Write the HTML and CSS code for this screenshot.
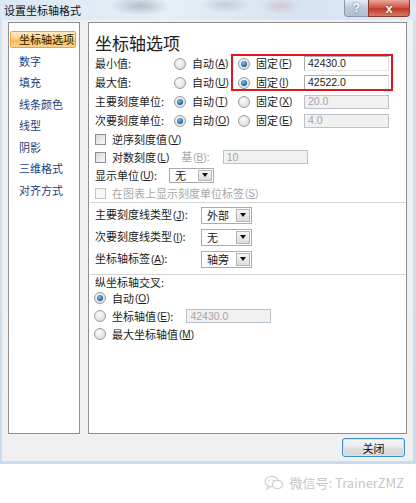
FILE: index.html
```html
<!DOCTYPE html>
<html lang="zh-CN">
<head>
    <meta charset="UTF-8">
    <meta name="viewport" content="width=device-width, initial-scale=1.0">
    <title>设置坐标轴格式</title>
    <link rel="stylesheet" href="styles.css">
</head>
<body>

<div class="window">
    <!-- Title bar -->
    <div class="titlebar">
        <span class="title">设置坐标轴格式</span>
        <div class="caption">
            <span class="cap-help">?</span>
            <span class="cap-close">x</span>
        </div>
    </div>

    <div class="frame">
        <div class="panes">
            <!-- Left navigation -->
            <ul class="nav">
                <li class="active">坐标轴选项</li>
                <li>数字</li>
                <li>填充</li>
                <li>线条颜色</li>
                <li>线型</li>
                <li>阴影</li>
                <li>三维格式</li>
                <li>对齐方式</li>
            </ul>

            <!-- Options -->
            <div class="content">
                <h2 class="section-title">坐标轴选项</h2>

                <div class="axis-rows">
                    <span>最小值:</span>
                    <label class="opt"><i class="radio"></i>自动<span class="key">(<u>A</u>)</span></label>
                    <label class="opt"><i class="radio on"></i>固定<span class="key">(<u>F</u>)</span></label>
                    <span class="field">42430.0</span>

                    <span>最大值:</span>
                    <label class="opt"><i class="radio"></i>自动<span class="key">(<u>U</u>)</span></label>
                    <label class="opt"><i class="radio on"></i>固定<span class="key">(<u>I</u>)</span></label>
                    <span class="field">42522.0</span>

                    <span>主要刻度单位:</span>
                    <label class="opt"><i class="radio on"></i>自动<span class="key">(<u>T</u>)</span></label>
                    <label class="opt"><i class="radio"></i>固定<span class="key">(<u>X</u>)</span></label>
                    <span class="field disabled">20.0</span>

                    <span>次要刻度单位:</span>
                    <label class="opt"><i class="radio on"></i>自动<span class="key">(<u>O</u>)</span></label>
                    <label class="opt"><i class="radio"></i>固定<span class="key">(<u>E</u>)</span></label>
                    <span class="field disabled">4.0</span>

                    <!-- red annotation box drawn over the fixed-value fields -->
                    <span class="highlight"></span>
                </div>

                <div class="check-row"><i class="check"></i>逆序刻度值<span class="key">(<u>V</u>)</span></div>
                <div class="check-row">
                    <i class="check"></i>对数刻度<span class="key">(<u>L</u>)</span>
                    <span class="muted base">基<span class="key">(<u>B</u>)</span>:</span>
                    <span class="field disabled">10</span>
                </div>
                <div class="check-row">
                    显示单位<span class="key">(<u>U</u>)</span>:
                    <span class="combo unit"><span class="combo-text">无</span><span class="combo-btn"></span></span>
                </div>
                <div class="check-row muted"><i class="check off"></i>在图表上显示刻度单位标签<span class="key">(<u>S</u>)</span></div>

                <div class="sep"></div>

                <div class="tick-rows">
                    <div class="tick-row">
                        <span class="tick-label">主要刻度线类型<span class="key">(<u>J</u>)</span>:</span>
                        <span class="combo"><span class="combo-text">外部</span><span class="combo-btn"></span></span>
                    </div>
                    <div class="tick-row">
                        <span class="tick-label">次要刻度线类型<span class="key">(<u>I</u>)</span>:</span>
                        <span class="combo"><span class="combo-text">无</span><span class="combo-btn"></span></span>
                    </div>
                    <div class="tick-row">
                        <span class="tick-label">坐标轴标签<span class="key">(<u>A</u>)</span>:</span>
                        <span class="combo"><span class="combo-text">轴旁</span><span class="combo-btn"></span></span>
                    </div>
                </div>

                <div class="sep sep-low"></div>

                <div class="cross-title">纵坐标轴交叉:</div>
                <div class="cross-row first"><i class="radio on"></i>自动<span class="key">(<u>O</u>)</span></div>
                <div class="cross-row">
                    <i class="radio"></i>坐标轴值<span class="key">(<u>E</u>)</span>:
                    <span class="field disabled cross-field">42430.0</span>
                </div>
                <div class="cross-row"><i class="radio"></i>最大坐标轴值<span class="key">(<u>M</u>)</span></div>
            </div>
        </div>

        <div class="footer">
            <button class="close-btn">关闭</button>
        </div>
    </div>
</div>

<!-- Watermark -->
<div class="watermark">
    <svg width="20" height="16" viewBox="0 0 20 16">
        <ellipse cx="7.5" cy="6.5" rx="6.5" ry="5.2" fill="none" stroke="#d2d2d2" stroke-width="1.2"/>
        <path d="M4 11 L3 14 L7 11.6" fill="none" stroke="#d2d2d2" stroke-width="1.1"/>
        <ellipse cx="13.5" cy="9.5" rx="5.2" ry="4.2" fill="#fff" stroke="#d2d2d2" stroke-width="1.2"/>
        <circle cx="5" cy="5.5" r="0.9" fill="#d2d2d2"/>
        <circle cx="9.5" cy="5.5" r="0.9" fill="#d2d2d2"/>
    </svg>
    <span>微信号: TrainerZMZ</span>
</div>

</body>
</html>
```

FILE: styles.css
```css
* {
    box-sizing: border-box;
    margin: 0;
    padding: 0;
}

body {
    font-family: "Noto Sans CJK SC", "Liberation Sans", sans-serif;
    font-size: 11px;
    line-height: 13px;
    color: #1b1b1b;
    background-color: #fff;
    width: 416px;
}

/* Window */
.window {
    background: linear-gradient(#d4e3f2, #c8dbef);
    padding: 0 3px 3px 2px;
}

.titlebar {
    height: 20px;
    display: flex;
    align-items: flex-start;
    justify-content: space-between;
    margin: 0 -3px 0 -2px;
    padding-left: 4px;
    background:
        radial-gradient(ellipse 30px 10px at 140px 6px, rgba(90, 100, 120, 0.35), transparent),
        radial-gradient(ellipse 25px 8px at 225px 5px, rgba(110, 120, 140, 0.25), transparent),
        radial-gradient(ellipse 20px 8px at 280px 6px, rgba(190, 120, 120, 0.25), transparent),
        linear-gradient(to right, #dbe7f3, #e7eff7 40%, #d6e3f1 70%, #dfe9f4);
}

.title {
    line-height: 20px;
    color: #111;
}

.caption {
    display: flex;
    margin-right: 6px;
}

.cap-help, .cap-close {
    height: 17px;
    display: flex;
    align-items: center;
    justify-content: center;
    font-family: "Liberation Sans", sans-serif;
    font-weight: bold;
    color: #fff;
}

.cap-help {
    width: 24px;
    border: 1px solid #8797ac;
    border-top: none;
    border-right: none;
    border-radius: 0 0 0 4px;
    background: linear-gradient(#e6edf5, #bccadb 50%, #aebfd3);
    font-size: 12px;
    text-shadow: 0 0 2px #4d5f78;
}

.cap-close {
    width: 42px;
    border: 1px solid #8c3a30;
    border-top: none;
    border-radius: 0 0 4px 0;
    background: linear-gradient(#e9a99b, #d0584a 45%, #c0392b 55%, #d77a68);
    font-size: 13px;
    text-shadow: 0 0 2px #5a1a12;
}

.frame {
    background-color: #f0f0f0;
    padding: 2px 6px 4px 6px;
}

.panes {
    display: flex;
    gap: 8px;
    height: 412px;
}

/* Navigation */
.nav {
    list-style: none;
    width: 72px;
    background-color: #fff;
    border: 1px solid #8c9096;
    padding-top: 8px;
}

.nav li {
    height: 17px;
    margin: 0 3px 4.5px 1px;
    padding-left: 9px;
    line-height: 17px;
    color: #1d3f7a;
}

.nav li.active {
    color: #2a1a00;
    border: 1px solid #e3a64a;
    border-radius: 2px;
    padding-left: 8px;
    line-height: 15px;
    background: linear-gradient(#fdebc6, #fbd48a 45%, #f8b957 55%, #fbd48d);
}

/* Content pane */
.content {
    width: 319px;
    background-color: #fff;
    border: 1px solid #8c9096;
    padding: 10px 6px 0 6px;
}

.section-title {
    font-size: 17px;
    font-weight: normal;
    line-height: 20px;
    height: 20px;
    margin-bottom: 1px;
    color: #222;
}

.key {
    font-family: "Liberation Sans", sans-serif;
    font-size: 10px;
    margin-left: 1px;
}

.axis-rows {
    display: grid;
    grid-template-columns: 79px 64px 66px 85px;
    grid-auto-rows: 19px;
    align-items: center;
    position: relative;
}

.opt {
    display: flex;
    align-items: center;
}

.highlight {
    position: absolute;
    left: 136px;
    top: 0;
    width: 162px;
    height: 37px;
    border: 2px solid #e2161f;
}

/* Controls */
.radio {
    width: 12px;
    height: 12px;
    flex: none;
    border-radius: 50%;
    border: 1px solid #9a9c9e;
    background: radial-gradient(circle at 40% 35%, #fbfbfb, #d4d6d8);
    margin-right: 6px;
    position: relative;
}

.radio.on::after {
    content: "";
    position: absolute;
    left: 2px;
    top: 2px;
    width: 6px;
    height: 6px;
    border-radius: 50%;
    background: radial-gradient(circle at 40% 35%, #7fc3ee, #1b5b95 70%);
}

.check {
    width: 11px;
    height: 11px;
    flex: none;
    border: 1px solid #8e8f8f;
    background: linear-gradient(135deg, #d9d9d9, #f7f7f7);
    margin-right: 6px;
}

.check.off {
    border-color: #c4c4c4;
    background: #f6f6f6;
}

.field {
    height: 15px;
    width: 85px;
    display: flex;
    align-items: center;
    padding-left: 3px;
    border: 1px solid #abadb3;
    border-right-color: #dbdfe6;
    border-bottom-color: #e3e9ef;
    background-color: #fff;
    font-family: "Liberation Sans", sans-serif;
    font-size: 10.5px;
    color: #222;
}

.field.disabled {
    height: 14px;
    border-color: #b9c3cc;
    background-color: #f1f1f1;
    color: #a6a6a6;
}

.muted {
    color: #a8a8a8;
}

.check-row {
    height: 18px;
    display: flex;
    align-items: center;
}

.base {
    margin: 0 13px 0 12px;
}

.combo {
    width: 51px;
    height: 17px;
    display: flex;
    align-items: center;
    justify-content: space-between;
    border: 1px solid #a9abb0;
    background-color: #fff;
    padding: 1px;
}

.combo.unit {
    width: 45px;
    height: 15px;
    margin-left: 12px;
}

.combo-text {
    padding-left: 4px;
}

.combo-btn {
    width: 14px;
    height: 100%;
    border: 1px solid #b5b5b5;
    background: linear-gradient(#f6f6f6, #dcdcdc);
    position: relative;
}

.combo-btn::after {
    content: "";
    position: absolute;
    left: 3px;
    top: 50%;
    margin-top: -2px;
    border-left: 3.5px solid transparent;
    border-right: 3.5px solid transparent;
    border-top: 4px solid #111;
}

.sep {
    height: 1px;
    background-color: #d6d6d6;
    margin: 0 -6px 0 -5px;
}

.tick-rows {
    margin-top: 1px;
}

.tick-row {
    height: 22px;
    display: flex;
    align-items: center;
}

.tick-label {
    width: 106px;
}

.sep-low {
    margin-top: 4px;
}

.cross-title {
    height: 14px;
    line-height: 14px;
}

.cross-row {
    height: 18px;
    display: flex;
    align-items: center;
}

.cross-row .radio {
    margin-left: -1px;
}

.cross-field {
    margin-left: 13px;
}

/* Footer */
.footer {
    display: flex;
    justify-content: flex-end;
    padding: 4px 2px 0 0;
}

.close-btn {
    width: 63px;
    height: 19px;
    font-family: "Noto Sans CJK SC", sans-serif;
    font-size: 11px;
    color: #111;
    border: 1px solid #3c8fc4;
    border-radius: 3px;
    background: linear-gradient(#f6f6f6, #ececec 45%, #dedede 55%, #d6d6d6);
    box-shadow: inset 0 0 0 1px #c8e6f8;
}

/* Watermark */
.watermark {
    height: 38px;
    display: flex;
    align-items: center;
    justify-content: flex-end;
    gap: 6px;
    padding-right: 12px;
    font-size: 13px;
    line-height: 16px;
    color: #c6c6c6;
}
```
